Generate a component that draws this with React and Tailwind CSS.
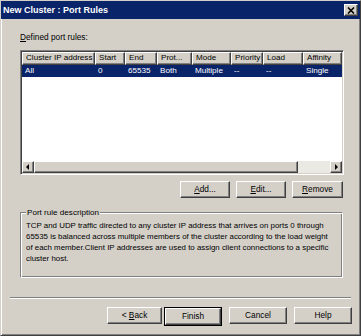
import React from 'react';

// raised classic button bevel
const raised =
  'border border-t-white border-l-white border-r-[#404040] border-b-[#404040] shadow-[inset_-1px_-1px_0_#808080] bg-[#d4d0c8]';

function Btn({ children, className = '' }) {
  return (
    <div className={`${raised} h-[17px] flex items-center justify-center text-[8.3px] text-black ${className}`}>
      {children}
    </div>
  );
}

function Arrow({ dir }) {
  return (
    <div className={`${raised} w-[12px] h-[12px] flex items-center justify-center`}>
      <svg width="4" height="6" viewBox="0 0 4 6">
        {dir === 'left' ? <path d="M3 0 L0 3 L3 6 Z" fill="#000" /> : <path d="M1 0 L4 3 L1 6 Z" fill="#000" />}
      </svg>
    </div>
  );
}

const columns = [
  { name: 'Cluster IP address', w: 'w-[73px]', val: 'All' },
  { name: 'Start', w: 'w-[30px]', val: '0' },
  { name: 'End', w: 'w-[32px]', val: '65535' },
  { name: 'Prot...', w: 'w-[35px]', val: 'Both' },
  { name: 'Mode', w: 'w-[39px]', val: 'Multiple' },
  { name: 'Priority', w: 'w-[32px]', val: '--' },
  { name: 'Load', w: 'w-[40px]', val: '--' },
  { name: 'Affinity', w: 'w-[39px]', val: 'Single' },
];

export default function App() {
  return (
    <div className="w-[361px] h-[336px] bg-[#d4d0c8] border border-t-[#d4d0c8] border-l-[#d4d0c8] border-r-[#404040] border-b-[#404040] shadow-[inset_1px_1px_0_#fff,inset_-1px_-1px_0_#808080] flex flex-col font-['Liberation_Sans',Arial,sans-serif] text-black overflow-hidden">
      {/* title bar */}
      <div className="h-[18px] bg-[#0a246a] flex items-center justify-between pl-[2px] pr-[2px]">
        <span className="text-white font-bold text-[9px] leading-none">New Cluster : Port Rules</span>
        <div className={`${raised} w-[14px] h-[12px] flex items-center justify-center`}>
          <svg width="8" height="7" viewBox="0 0 8 7">
            <path d="M1 0.5 L7 6.5 M7 0.5 L1 6.5" stroke="#000" strokeWidth="1.6" />
          </svg>
        </div>
      </div>

      <div className="flex flex-col pl-[19px] pr-[16px]">
        <div className="mt-[13px] h-[11px] text-[8.3px] leading-[11px]">
          <span className="underline">D</span>efined port rules:
        </div>

        {/* list view */}
        <div className="mt-[7px] w-[324px] h-[125px] border border-t-[#808080] border-l-[#808080] border-r-white border-b-white shadow-[inset_1px_1px_0_#404040,inset_-1px_-1px_0_#d4d0c8] p-[1px]">
          <div className="w-full h-full bg-white flex flex-col">
            <div className="flex h-[13px]">
              {columns.map((c) => (
                <div key={c.name} className={`${raised} ${c.w} h-[13px] flex items-center pl-[3px] text-[8.1px] leading-none whitespace-nowrap overflow-hidden`}>
                  {c.name}
                </div>
              ))}
            </div>
            <div className="flex h-[12px] bg-[#0a246a] text-white">
              {columns.map((c) => (
                <div key={c.name} className={`${c.w} flex items-center pl-[3px] text-[8.1px] leading-none whitespace-nowrap`}>
                  {c.val}
                </div>
              ))}
            </div>
            <div className="flex-1" />
            {/* horizontal scrollbar */}
            <div className="flex h-[12px] bg-[#ebe9e3]">
              <Arrow dir="left" />
              <div className={`${raised} w-[264px] h-[12px]`} />
              <div className="flex-1" />
              <Arrow dir="right" />
            </div>
          </div>
        </div>

        <div className="mt-[6px] flex justify-end gap-[6px] w-[324px] pr-[1px]">
          <Btn className="w-[50px]">
            <span><span className="underline">A</span>dd...</span>
          </Btn>
          <Btn className="w-[50px]">
            <span><span className="underline">E</span>dit...</span>
          </Btn>
          <Btn className="w-[51px]">
            <span><span className="underline">R</span>emove</span>
          </Btn>
        </div>

        {/* group box */}
        <div className="relative mt-[14px] w-[323px] h-[66px] border border-t-[#808080] border-l-[#808080] border-r-white border-b-white shadow-[inset_1px_1px_0_#fff,inset_-1px_-1px_0_#808080] pl-[5px] pt-[7px]">
          <span className="absolute left-[5px] top-[-6px] bg-[#d4d0c8] px-[1px] text-[8.1px] leading-[11px]">
            Port rule description
          </span>
          <p className="text-[7.9px] leading-[11px] whitespace-nowrap">
            TCP and UDP traffic directed to any cluster IP address that arrives on ports 0 through
            <br />
            65535 is balanced across multiple members of the cluster according to the load weight
            <br />
            of each member.Client IP addresses are used to assign client connections to a specific
            <br />
            cluster host.
          </p>
        </div>
      </div>

      {/* separator */}
      <div className="mt-[19px] mx-[9px] h-[2px] border-t border-t-[#808080] border-b border-b-white" />

      <div className="mt-[8px] flex pl-[106px]">
        <Btn className="w-[55px]">
          <span>&lt; <span className="underline">B</span>ack</span>
        </Btn>
        <div className="ml-[2px] border border-black">
          <Btn className="w-[56px] h-[15px]">Finish</Btn>
        </div>
        <Btn className="w-[58px] ml-[7px]">Cancel</Btn>
        <Btn className="w-[58px] ml-[7px]">Help</Btn>
      </div>
    </div>
  );
}
